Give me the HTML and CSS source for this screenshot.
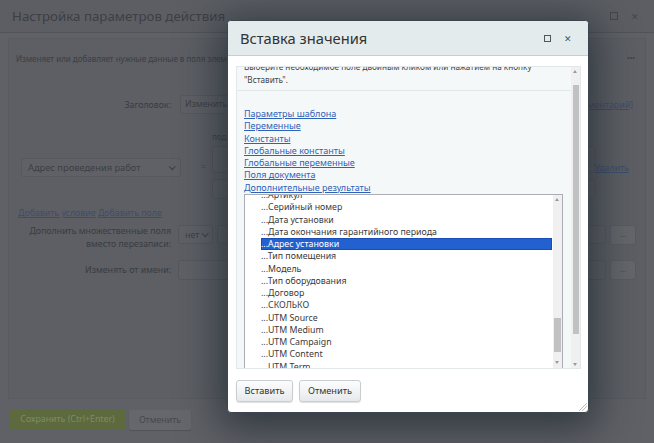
FILE: index.html
```html
<!DOCTYPE html>
<html lang="ru">
<head>
<meta charset="utf-8">
<title>Вставка значения</title>
<link rel="stylesheet" href="styles.css">
</head>
<body>
<div class="page">
  <div class="bg-head">
    <div class="bg-title">Настройка параметров действия</div>
    <div class="bg-icons"><span class="bg-max"></span><span class="bg-close">✕</span></div>
  </div>
  <div class="bg-panel">
    <div class="bg-desc"><span>Изменяет или добавляет нужные данные в поля элемента документа</span><span class="dots">•••</span></div>
    <div class="row r-title">
      <div class="lbl">Заголовок:</div>
      <div class="inp inp-title">Изменить документ</div>
      <a class="bg-link comment">[Комментарий]</a>
    </div>
    <div class="row r-cond">
      <div class="sel sel-field"><span>Адрес проведения работ</span><span class="chev"></span></div>
      <div class="eq">=</div>
      <div class="cond-right">
        <div class="small">подставить значение</div>
        <div class="inp tall"></div>
        <div class="inp short"></div>
      </div>
      <a class="bg-link del">Удалить</a>
    </div>
    <div class="row r-links"><a class="bg-link">Добавить условие</a>&nbsp;<a class="bg-link">Добавить поле</a></div>
    <div class="row r-multi">
      <div class="lbl two">Дополнить множественные поля<br>вместо перезаписи:</div>
      <div class="sel sel-no"><span>нет</span><span class="chev"></span></div>
      <div class="inp grow"></div>
      <div class="btn-dots">...</div>
    </div>
    <div class="row r-user">
      <div class="lbl">Изменять от имени:</div>
      <div class="inp grow"></div>
      <div class="btn-dots">...</div>
    </div>
  </div>
  <div class="bg-foot">
    <div class="bg-btn save">Сохранить (Ctrl+Enter)</div>
    <div class="bg-btn cancel">Отменить</div>
  </div>

  <div class="modal">
    <div class="m-head">
      <div class="m-title">Вставка значения</div>
      <span class="m-max"></span>
      <span class="m-close">✕</span>
    </div>
    <div class="m-body">
      <div class="scroll">
        <div class="scroll-content">
          <div class="inner">
            <p class="hint">Выберите необходимое поле двойным кликом или нажатием на кнопку<br>"Вставить".</p>
            <div class="sep"></div>
            <div class="links">
              <a>Параметры шаблона</a>
              <a>Переменные</a>
              <a>Константы</a>
              <a>Глобальные константы</a>
              <a>Глобальные переменные</a>
              <a>Поля документа</a>
              <a>Дополнительные результаты</a>
            </div>
            <div class="listbox">
              <div class="items">
                <div class="opt">...Артикул</div>
                <div class="opt">...Серийный номер</div>
                <div class="opt">...Дата установки</div>
                <div class="opt">...Дата окончания гарантийного периода</div>
                <div class="opt selected">...Адрес установки</div>
                <div class="opt">...Тип помещения</div>
                <div class="opt">...Модель</div>
                <div class="opt">...Тип оборудования</div>
                <div class="opt">...Договор</div>
                <div class="opt">...СКОЛЬКО</div>
                <div class="opt">...UTM Source</div>
                <div class="opt">...UTM Medium</div>
                <div class="opt">...UTM Campaign</div>
                <div class="opt">...UTM Content</div>
                <div class="opt">...UTM Term</div>
              </div>
              <div class="vbar small-bar">
                <span class="arrow up"></span>
                <span class="thumb"></span>
                <span class="arrow down"></span>
              </div>
            </div>
          </div>
        </div>
        <div class="vbar outer-bar">
          <span class="arrow up"></span>
          <span class="thumb"></span>
          <span class="arrow down"></span>
        </div>
      </div>
      <div class="m-buttons">
        <div class="m-btn b-insert">Вставить</div>
        <div class="m-btn b-cancel">Отменить</div>
      </div>
    </div>
    <div class="resize"></div>
  </div>
</div>
</body>
</html>
```

FILE: styles.css
```css
html, body {
  margin: 0;
  padding: 0;
}
body {
  font-family: "Noto Sans", "Open Sans", sans-serif;
  color: #3a3c41;
}
.page {
  position: relative;
  width: 654px;
  height: 443px;
  overflow: hidden;
  background: #606166;
}

/* ---------- background dialog ---------- */
.bg-head {
  height: 33px;
  box-sizing: border-box;
  border-bottom: 1px solid #515358;
  background: #5c5e63;
  display: flex;
  align-items: center;
  padding: 0 15px 0 12px;
}
.bg-title {
  flex: 1;
  font-size: 13.3px;
  color: #3d3f44;
  white-space: nowrap;
}
.bg-icons {
  display: flex;
  align-items: center;
  gap: 13px;
}
.bg-max {
  width: 6px;
  height: 6px;
  border: 1px solid #44464b;
}
.bg-close {
  font-size: 9px;
  color: #44464b;
}
.bg-panel {
  margin: 5px 8px 0;
  height: 361px;
  box-sizing: border-box;
  border: 1px solid #595b60;
  background: #5d5f64;
  padding: 0 8px 0 7px;
  font-size: 8px;
}
.bg-desc {
  height: 38px;
  display: flex;
  align-items: center;
  justify-content: space-between;
  white-space: nowrap;
  overflow: hidden;
  color: #3c3e43;
}
.dots {
  font-size: 7px;
  color: #3a3c40;
  margin-right: 2px;
}
.row {
  display: flex;
}
.lbl {
  width: 155px;
  flex: none;
  text-align: right;
  white-space: nowrap;
  font-size: 8.8px;
  color: #3a3c41;
}
.inp {
  box-sizing: border-box;
  border: 1px solid #56585d;
  border-radius: 3px;
  background: #5f6166;
  font-size: 8.8px;
  color: #3d3f44;
  padding-left: 4px;
}
.r-title {
  margin-top: 18px;
  height: 19px;
  align-items: center;
}
.inp-title {
  margin-left: 9px;
  flex: 1;
  height: 19px;
  line-height: 17px;
  margin-right: 6px;
}
.bg-link {
  color: #3e4d6d;
  text-decoration: underline;
  font-size: 8.8px;
  white-space: nowrap;
}
.comment {
  margin-right: 4px;
}
.r-cond {
  margin-top: 16px;
  height: 70px;
  align-items: flex-start;
}
.sel {
  box-sizing: border-box;
  border: 1px solid #56585d;
  border-radius: 3px;
  background: #5f6166;
  display: flex;
  align-items: center;
  justify-content: space-between;
  font-size: 8.8px;
  color: #3d3f44;
}
.chev {
  width: 3.5px;
  height: 3.5px;
  border-right: 1.2px solid #3a3c41;
  border-bottom: 1.2px solid #3a3c41;
  transform: rotate(45deg);
  margin-top: -3px;
}
.sel-field {
  margin: 28px 0 0 5px;
  width: 160px;
  height: 19px;
  padding: 0 6px 0 6px;
  font-size: 9.3px;
}
.eq {
  margin: 30px 0 0 20px;
  width: 11px;
  font-size: 9px;
  color: #44464b;
}
.cond-right {
  flex: 1;
  display: flex;
  flex-direction: column;
}
.small {
  height: 14px;
  line-height: 14px;
  font-size: 8px;
  color: #404247;
  white-space: nowrap;
}
.tall {
  margin-top: 2px;
  height: 27px;
}
.short {
  margin-top: 6px;
  height: 20px;
}
.del {
  margin: 32px 8px 0 0;
}
.r-links {
  margin-top: 7px;
  height: 13px;
  line-height: 13px;
  padding-left: 2px;
  font-size: 8.8px;
}
.r-multi {
  margin-top: 5px;
  height: 20px;
  align-items: flex-start;
}
.two {
  line-height: 12.6px;
}
.sel-no {
  margin-left: 7px;
  width: 35px;
  height: 19px;
  padding: 0 5px 0 6px;
}
.grow {
  flex: 1;
  height: 19px;
}
.r-multi .grow {
  margin-left: 4px;
}
.r-user {
  margin-top: 15px;
  height: 20px;
  align-items: center;
}
.r-user .grow {
  margin-left: 7px;
  height: 20px;
}
.btn-dots {
  width: 26px;
  height: 20px;
  margin-left: 4px;
  margin-right: 1px;
  box-sizing: border-box;
  border: 1px solid #595b60;
  border-radius: 3px;
  background: #64666b;
  font-size: 8px;
  line-height: 15px;
  text-align: center;
  color: #45474c;
}
.bg-foot {
  display: flex;
  gap: 3px;
  margin-top: 10px;
  padding-left: 9px;
}
.bg-btn {
  height: 21px;
  line-height: 21px;
  border-radius: 2px;
  font-size: 8.8px;
  text-align: center;
  box-sizing: border-box;
  white-space: nowrap;
}
.save {
  width: 117px;
  background: #5c6a3e;
  color: #808b66;
}
.cancel {
  margin-top: 1px;
  height: 20px;
  line-height: 20px;
  width: 62px;
  background: #65676c;
  color: #45474c;
  box-shadow: 0 1px 1px rgba(0, 0, 0, 0.15);
}

/* ---------- modal window ---------- */
.modal {
  position: absolute;
  left: 227px;
  top: 20px;
  width: 362px;
  height: 393px;
  box-sizing: border-box;
  border: 1px solid #3d464f;
  border-radius: 4px;
  background: #fff;
  box-shadow: 0 8px 40px 8px rgba(28, 38, 48, 0.7);
  overflow: hidden;
}
.m-head {
  height: 35px;
  box-sizing: border-box;
  border-bottom: 1px solid #c6ced1;
  background: #e4ebed;
  display: flex;
  align-items: center;
  padding: 0 15px 0 12px;
}
.m-title {
  flex: 1;
  font-size: 14.7px;
  color: #333;
  white-space: nowrap;
}
.m-max {
  width: 5px;
  height: 5px;
  border: 1px solid #555;
  margin-right: 13px;
}
.m-close {
  font-size: 9px;
  color: #555;
  margin-right: 1px;
}
.m-body {
  padding: 10px 7px 0 8px;
}
.scroll {
  height: 303px;
  box-sizing: border-box;
  border: 1px solid #e2e7e9;
  background: #f5f8f9;
  display: flex;
}
.scroll-content {
  flex: 1;
  overflow: hidden;
}
.inner {
  margin-top: -7px;
}
.hint {
  margin: 0;
  padding-left: 7px;
  font-size: 8.2px;
  line-height: 13px;
  color: #444;
  white-space: nowrap;
}
.sep {
  margin-top: 4px;
  height: 1px;
  background: #e1e6e8;
}
.links {
  margin-top: 17px;
  padding-left: 7px;
  display: flex;
  flex-direction: column;
  align-items: flex-start;
}
.links a {
  font-size: 9px;
  line-height: 12.3px;
  color: #2d62b8;
  text-decoration: underline;
}
.listbox {
  margin-left: 7px;
  width: 319px;
  height: 182px;
  box-sizing: border-box;
  border: 1px solid #abadb3;
  background: #fff;
  display: flex;
}
.items {
  flex: 1;
  overflow: hidden;
}
.opt {
  margin: 0 1px 0 16px;
  font-size: 8.8px;
  line-height: 12.25px;
  height: 12.25px;
  color: #3a3a3a;
  white-space: nowrap;
}
.opt:first-child {
  margin-top: -6px;
}
.opt.selected {
  background: #2361d1;
  color: #fff;
  box-shadow: inset 0 0 0 1px #1a4cb5;
}
.vbar {
  width: 9px;
  flex: none;
  background: #f0f0f0;
  position: relative;
}
.thumb {
  position: absolute;
  left: 1px;
  right: 1px;
  background: #c1c1c1;
}
.small-bar .thumb {
  top: 123px;
  height: 34px;
}
.outer-bar .thumb {
  top: 18px;
  height: 249px;
  left: 2px;
  right: 1px;
}
.arrow {
  position: absolute;
  left: 2px;
  width: 0;
  height: 0;
  border-left: 2.5px solid transparent;
  border-right: 2.5px solid transparent;
}
.arrow.up {
  top: 3px;
  border-bottom: 3px solid #9a9a9a;
}
.small-bar .arrow.down {
  top: 166px;
  border-top: 3px solid #9a9a9a;
}
.outer-bar .arrow.down {
  top: 296px;
  border-top: 3px solid #9a9a9a;
}
.m-buttons {
  display: flex;
  gap: 6px;
  margin-top: 11px;
}
.m-btn {
  height: 22px;
  line-height: 20px;
  box-sizing: border-box;
  text-align: center;
  border: 1px solid #c8cdd0;
  border-radius: 3px;
  background: linear-gradient(#fdfdfd, #e6e9eb);
  box-shadow: 0 1px 1px rgba(0, 0, 0, 0.12);
  font-size: 9.2px;
  color: #333;
}
.b-insert {
  width: 57px;
}
.b-cancel {
  width: 62px;
}
.resize {
  position: absolute;
  right: 1px;
  bottom: 1px;
  width: 8px;
  height: 8px;
  background: linear-gradient(135deg, transparent 45%, #bbb 45%, #bbb 52%, transparent 52%, transparent 68%, #bbb 68%, #bbb 75%, transparent 75%);
}
```
